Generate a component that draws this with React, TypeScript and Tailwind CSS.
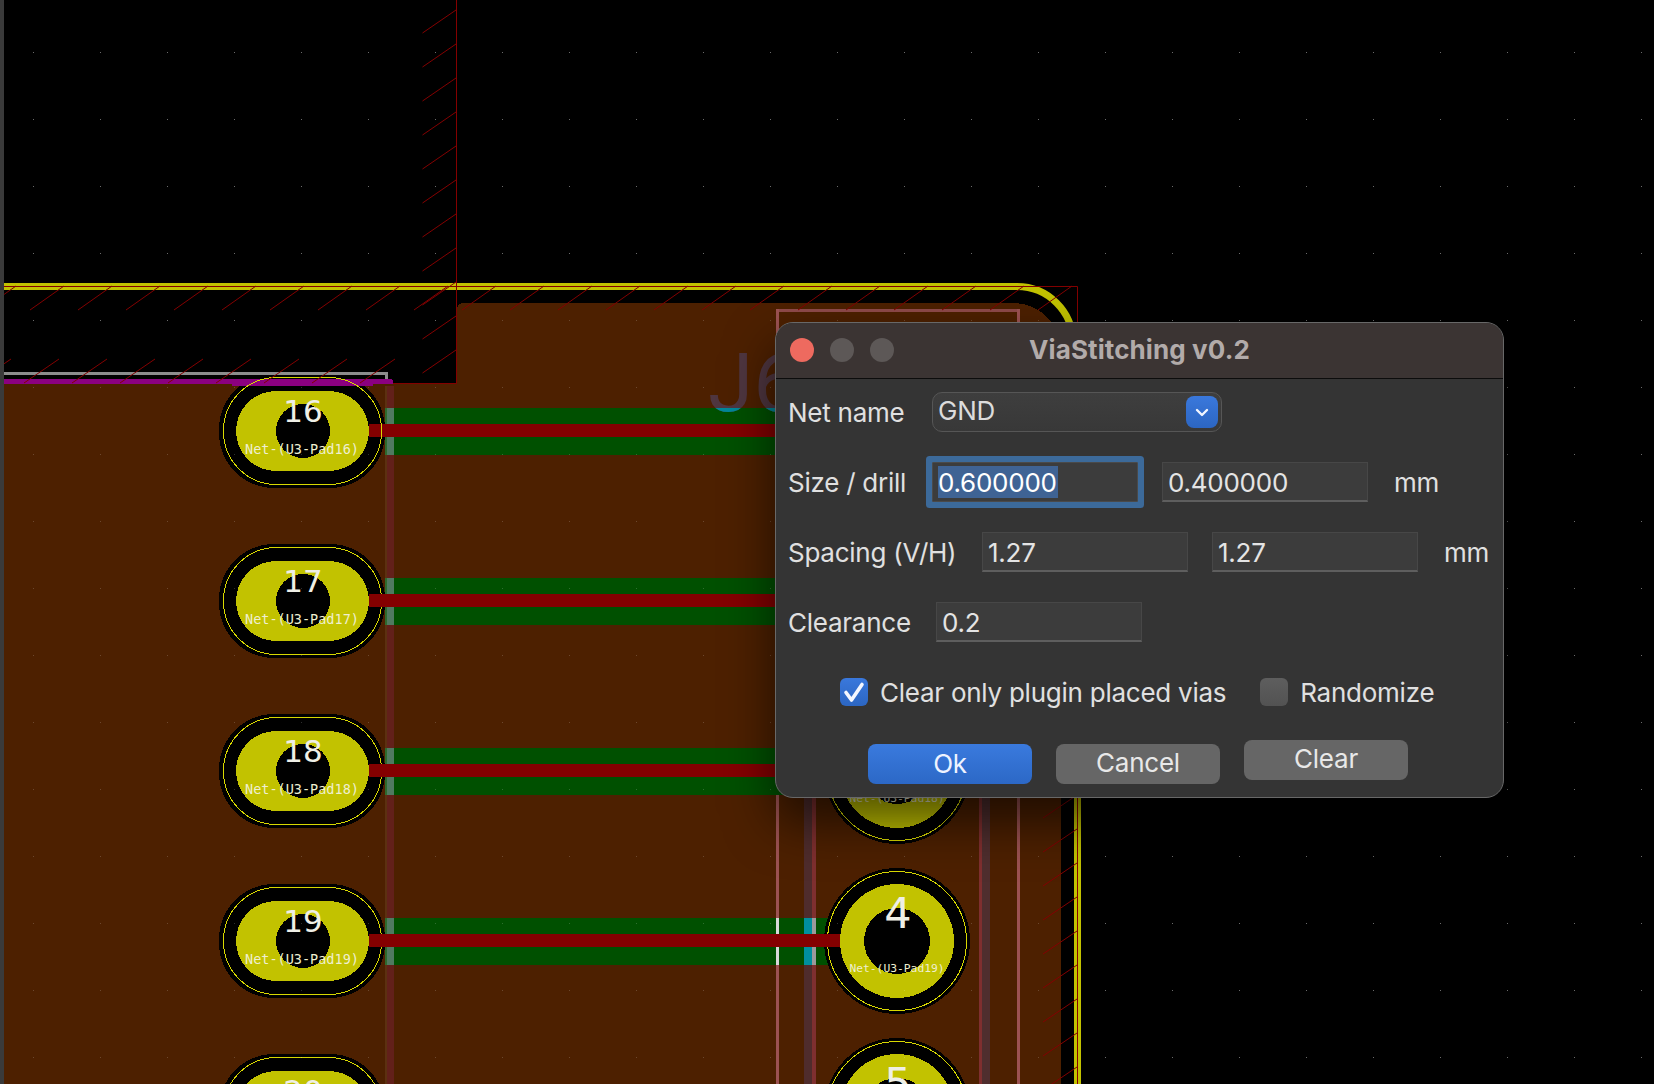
import React from "react";

const Y = "#c2c200";
const GREEN = "#005000";
const RED = "#840000";
const BROWN = "#4d2000";
const range = (n: number) => Array.from({ length: n }, (_, i) => i);

function OvalPad({ cy, num }: { cy: number; num: number }) {
  return (
    <g>
      <rect x={219} y={cy - 57} width={166} height={114} rx={55} fill="#000" />
      <rect x={236} y={cy - 40} width={133} height={80} rx={40} fill={Y} />
      <circle cx={303} cy={cy} r={27} fill="#000" />
      <rect x={223.5} y={cy - 53.5} width={158} height={107} rx={53} fill="none" stroke="#d8d800" strokeWidth={1} />
      <text x={303} y={cy - 9} textAnchor="middle" fontFamily="'DejaVu Sans', sans-serif" fontSize={31} fill="#efefe6">{num}</text>
      <text x={302} y={cy + 23} textAnchor="middle" fontFamily="'DejaVu Sans Mono', monospace" fontSize={13.5} fill="#efefd0">{`Net-(U3-Pad${num})`}</text>
    </g>
  );
}

function RoundPad({ cy, num, label }: { cy: number; num: number; label?: string }) {
  return (
    <g>
      <circle cx={897} cy={cy} r={73} fill="#000" />
      <circle cx={897} cy={cy} r={57} fill={Y} />
      <circle cx={897} cy={cy} r={33} fill="#000" />
      <circle cx={897} cy={cy} r={69.5} fill="none" stroke="#d8d800" strokeWidth={1} />
      <text x={898} y={cy - 13} textAnchor="middle" fontFamily="'DejaVu Sans', sans-serif" fontSize={43} fill="#efefe6">{num}</text>
      {label && <text x={897} y={cy + 31} textAnchor="middle" fontFamily="'DejaVu Sans Mono', monospace" fontSize={11.3} fill="#efefd0">{label}</text>}
    </g>
  );
}

function Board() {
  const rows = [431, 601, 771, 941];
  return (
    <svg width={1650} height={1084} viewBox="4 0 1650 1084" className="block shrink-0" shapeRendering="crispEdges">
      <defs>
        <clipPath id="greenclip"><rect x={690} y={408} width={100} height={47} /></clipPath>
      </defs>
      <rect x={4} y={0} width={1650} height={1084} fill="#000" />

      {/* copper pour */}
      <path d="M4 383 H457 V310 Q457 303 464 303 H1013 A48 48 0 0 1 1061 351 V1084 H4 Z" fill={BROWN} />

      {/* right vertical courtyard lines */}
      <rect x={776} y={309} width={244} height={3} fill="#8f4a4a" />
      <rect x={776} y={309} width={3} height={775} fill="#9c5252" />
      <rect x={804} y={780} width={8} height={304} fill="#4f2c2c" />
      <rect x={812} y={780} width={4} height={304} fill="#7f2f2f" />
      <rect x={979} y={780} width={3} height={304} fill="#7f2f2f" />
      <rect x={982} y={780} width={8} height={304} fill="#4f2e2e" />
      <rect x={1017} y={309} width={3} height={775} fill="#9c5252" />

      {/* left courtyard */}
      <rect x={385} y={386} width={2} height={698} fill="#5c3010" />
      <rect x={387} y={386} width={7} height={698} fill="#62201a" />

      {/* tracks */}
      {rows.map((cy) => (
        <g key={cy}>
          <rect x={385} y={cy - 23} width={cy === 941 ? 440 : 400} height={47} fill={GREEN} />
          <rect x={385} y={cy - 23} width={2} height={47} fill="#2e6a2e" />
          <rect x={387} y={cy - 23} width={7} height={47} fill="#4f7a60" />
        </g>
      ))}
      <rect x={776} y={918} width={3} height={47} fill="#d8d8d8" />
      <rect x={804} y={918} width={8} height={47} fill="#008f9f" />
      <rect x={812} y={918} width={4} height={47} fill="#9a9a9a" />
      <path d="M816 918 H828 L838 908 V975 L828 965 H816 Z" fill={GREEN} />

      {/* J6 silkscreen */}
      <text x={708} y={411} fontFamily="Roboto, sans-serif" fontWeight={400} fontSize={82} fill="#4f3640">J6</text>
      <text x={708} y={411} fontFamily="Roboto, sans-serif" fontWeight={400} fontSize={82} fill="#00889a" clipPath="url(#greenclip)">J6</text>

      {/* pads */}
      {[431, 601, 771, 941, 1111].map((cy, i) => <OvalPad key={cy} cy={cy} num={16 + i} />)}
      <RoundPad cy={771} num={3} label="Net-(U3-Pad18)" />
      <RoundPad cy={941} num={4} label="Net-(U3-Pad19)" />
      <RoundPad cy={1111} num={5} />
      {rows.map((cy) => <rect key={cy} x={369} y={cy - 7} width={cy === 941 ? 471 : 410} height={13} fill={RED} />)}

      {/* black keep-out band */}
      <rect x={1061} y={300} width={16} height={784} fill="#000" />
      <rect x={1074} y={342} width={7} height={742} fill={Y} />

      {/* board edge */}
      <path d="M4 286.5 H1017 A56 56 0 0 1 1073 342" fill="none" stroke={Y} strokeWidth={7} shapeRendering="auto" />
      <rect x={4} y={372} width={384} height={3} fill="#8c8c8c" />
      <rect x={385} y={372} width={3} height={8} fill="#8c8c8c" />
      <path d="M4 379 H390 Q393 379 393 382 V384 H373 V386 H232 V384 H4 Z" fill="#8b0080" />
      <rect x={223.5} y={377.5} width={158} height={107} rx={53} fill="none" stroke="#d8d800" strokeWidth={1} />

      {/* keep-out outline + hatching */}
      <g stroke={RED} strokeWidth={1} fill="none" shapeRendering="auto">
        <path d="M456.5 0 V383.5 H393" />
        <path d="M4 286.5 H1077.5 V1084" />
        {range(23).map((k) => <path key={`a${k}`} d={`M${30 + 48 * k - 48} 310 L${64 + 48 * k - 48} 286`} />)}
        {range(9).map((k) => <path key={`b${k}`} d={`M${24 + 48 * k - 48} 383 L${59 + 48 * k - 48} 359`} />)}
        {[10, 44, 78, 112, 146, 180, 214, 248, 282, 316, 350].map((y) => <path key={`c${y}`} d={`M422.5 ${y + 23} L456 ${y}`} />)}
        {range(10).map((k) => <path key={`d${k}`} d={`M${1043} ${818 + 34 * k} L1077 ${795 + 34 * k}`} />)}
      </g>

      {/* grid */}
      {range(16).map((r) =>
        range(25).map((c) => {
          const x = 33 + 67 * c;
          const y = 52 + 67 * r;
          const onCopper = (y > 383 && x < 1061) || (y > 303 && x > 457 && x < 1061);
          return <rect key={`${r}-${c}`} x={x} y={y} width={1} height={1} fill="#fff" opacity={onCopper ? 0.18 : 0.42} />;
        })
      )}
    </svg>
  );
}

function Field({ w = "w-[206px]", children }: { w?: string; children: React.ReactNode }) {
  return (
    <div className={`${w} h-[40px] shrink-0 bg-[#3c3c3c] border border-[#474747] border-b-[#5e5e5e] border-b-2 flex items-center pl-[5px] pt-[2px] text-[#e4e4e4]`}>
      {children}
    </div>
  );
}

function Lbl({ w, children }: { w: string; children: React.ReactNode }) {
  return <div className={`${w} shrink-0 pt-[2px] text-[#e0e0e0]`}>{children}</div>;
}

export default function App() {
  return (
    <div className="relative flex w-[1654px] h-[1084px] overflow-hidden bg-black">
      <div className="w-[4px] shrink-0 bg-[#3a3a3a]" />
      <Board />

      <div
        className="absolute left-[775px] top-[322px] w-[729px] h-[476px] rounded-[18px] bg-[#343434] border border-[#686868] shadow-[0_24px_50px_rgba(0,0,0,0.6)] overflow-hidden text-[26px] tracking-[-0.25px] leading-none"
        style={{ fontFamily: "Inter, 'Liberation Sans', sans-serif" }}
      >
        <div className="relative h-[56px] bg-[#3b3433] border-b border-[#0c0c0c] flex items-center justify-center">
          <div className="absolute left-[14px] top-[15px] flex gap-[16px]">
            <div className="w-[24px] h-[24px] rounded-full bg-[#ee6a5f]" />
            <div className="w-[24px] h-[24px] rounded-full bg-[#5d5857]" />
            <div className="w-[24px] h-[24px] rounded-full bg-[#5d5857]" />
          </div>
          <div className="text-[26px] font-bold tracking-[0.1px] pb-[2px] text-[#b2abaa]">ViaStitching v0.2</div>
        </div>

        <div className="flex flex-col pl-[12px] pt-[13px]">
          <div className="flex items-center h-[40px]">
            <Lbl w="w-[144px]">Net name</Lbl>
            <div className="relative w-[290px] h-[40px] shrink-0 rounded-[10px] border border-[#565656] bg-gradient-to-b from-[#3e3e3e] to-[#383838] flex items-center pl-[5px] text-[#dcdcdc] pb-[2px]">
              GND
              <div className="absolute right-[3px] top-[3px] w-[32px] h-[32px] rounded-[8px] bg-gradient-to-b from-[#3a78dc] to-[#2c66c2] flex items-center justify-center">
                <svg width="16" height="16" viewBox="0 0 16 16" fill="none"><path d="M3 6 L8 11 L13 6" stroke="#f2f6ff" strokeWidth="2.4" strokeLinecap="round" strokeLinejoin="round" /></svg>
              </div>
            </div>
          </div>

          <div className="flex items-center h-[40px] mt-[30px]">
            <Lbl w="w-[144px]">Size / drill</Lbl>
            <div className="w-[206px] h-[40px] shrink-0 bg-[#3c3c3c] border border-[#4a4a4a] shadow-[0_0_0_6px_#3c6a9a] rounded-[1px] flex items-center pl-[5px] text-white">
              <span className="bg-[#3f6394] h-[32px] pt-[2px] flex items-center w-[120px] overflow-visible whitespace-nowrap">0.600000</span>
            </div>
            <div className="ml-[24px]"><Field>0.400000</Field></div>
            <div className="ml-[26px] pt-[2px] text-[#e0e0e0]">mm</div>
          </div>

          <div className="flex items-center h-[40px] mt-[30px]">
            <Lbl w="w-[194px]">Spacing (V/H)</Lbl>
            <Field>1.27</Field>
            <div className="ml-[24px]"><Field>1.27</Field></div>
            <div className="ml-[26px] pt-[2px] text-[#e0e0e0]">mm</div>
          </div>

          <div className="flex items-center h-[40px] mt-[30px]">
            <Lbl w="w-[148px]">Clearance</Lbl>
            <Field>0.2</Field>
          </div>

          <div className="flex items-center h-[28px] mt-[36px] pl-[52px]">
            <div className="w-[28px] h-[28px] rounded-[6px] bg-gradient-to-b from-[#3a78dc] to-[#2c66c2] flex items-center justify-center">
              <svg width="28" height="28" viewBox="0 0 28 28" fill="none"><path d="M6 14.5 L11.5 22 L22 6.5" stroke="#f4f7ff" strokeWidth="3.6" strokeLinecap="round" strokeLinejoin="round" /></svg>
            </div>
            <div className="ml-[12px] pt-[2px] text-[#e0e0e0] whitespace-nowrap">Clear only plugin placed vias</div>
            <div className="ml-[34px] w-[28px] h-[28px] rounded-[6px] bg-gradient-to-b from-[#5e5e5e] to-[#525252]" />
            <div className="ml-[12px] pt-[2px] text-[#e0e0e0]">Randomize</div>
          </div>

          <div className="flex items-start mt-[38px] pl-[80px]">
            <button className="w-[164px] h-[40px] rounded-[8px] bg-gradient-to-b from-[#3a7ade] to-[#2c68c6] text-[#eef3ff]">Ok</button>
            <button className="ml-[24px] w-[164px] h-[40px] rounded-[8px] bg-[#666666] pb-[2px] text-[#e8e8e8]">Cancel</button>
            <button className="ml-[24px] -mt-[4px] w-[164px] h-[40px] rounded-[8px] bg-[#666666] pb-[2px] text-[#e8e8e8]">Clear</button>
          </div>
        </div>
      </div>
    </div>
  );
}
